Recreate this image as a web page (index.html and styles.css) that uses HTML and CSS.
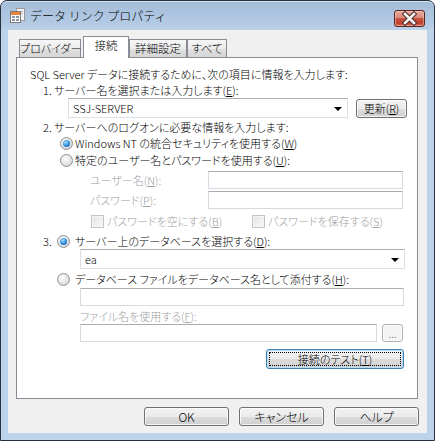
FILE: index.html
```html
<!DOCTYPE html>
<html lang="ja">
<head>
    <meta charset="UTF-8">
    <title>データ リンク プロパティ</title>
    <link rel="stylesheet" href="styles.css">
</head>
<body>
<div class="window">
    <div class="titlebar">
        <svg class="app-icon" width="16" height="16" viewBox="0 0 16 16">
            <rect x="6.5" y="0.5" width="8" height="12" fill="#f4f4f4" stroke="#9a9a9a"/>
            <line x1="8" y1="3.5" x2="13" y2="3.5" stroke="#b8b8b8"/>
            <line x1="8" y1="5.5" x2="13" y2="5.5" stroke="#b8b8b8"/>
            <rect x="0.5" y="3.5" width="10" height="11" fill="#fff" stroke="#7a7a7a"/>
            <rect x="1" y="4" width="9" height="3" fill="#e9843c"/>
            <rect x="2" y="8" width="3" height="2" fill="#8b96a6"/>
            <rect x="6" y="8" width="3" height="2" fill="#8b96a6"/>
            <rect x="2" y="11" width="3" height="2" fill="#8b96a6"/>
            <rect x="6" y="11" width="3" height="2" fill="#8b96a6"/>
        </svg>
        <span class="title">データ リンク プロパティ</span>
        <div class="close">
            <svg width="31" height="17" viewBox="0 0 31 17">
                <path d="M11 4 L20 13 M20 4 L11 13" stroke="#4b2b28" stroke-width="4.6" stroke-linecap="square"/>
                <path d="M11 4 L20 13 M20 4 L11 13" stroke="#f4f4f4" stroke-width="2.6" stroke-linecap="square"/>
            </svg>
        </div>
    </div>

    <div class="client">
        <div class="tabs">
            <span class="tab t1">プロバイダー</span>
            <span class="tab active">接続</span>
            <span class="tab t3">詳細設定</span>
            <span class="tab t4">すべて</span>
        </div>

        <div class="panel">
            <div class="line intro">SQL Server データに接続するために、次の項目に情報を入力します:</div>
            <div class="line step">1. サーバー名を選択または入力します(<u>E</u>):</div>

            <div class="row server-row">
                <div class="combo server-combo">SSJ-SERVER<span class="arrow"></span></div>
                <button class="btn refresh">更新(<u>R</u>)</button>
            </div>

            <div class="line step step2">2. サーバーへのログオンに必要な情報を入力します:</div>
            <div class="line opt">
                <span class="radio checked"></span>Windows NT の統合セキュリティを使用する(<u>W</u>)
            </div>
            <div class="line opt opt-user">
                <span class="radio"></span>特定のユーザー名とパスワードを使用する(<u>U</u>):
            </div>

            <div class="row cred user-row">
                <span class="cred-label">ユーザー名(<u>N</u>):</span>
                <div class="field cred-field"></div>
            </div>
            <div class="row cred pass-row">
                <span class="cred-label">パスワード(<u>P</u>):</span>
                <div class="field cred-field"></div>
            </div>

            <div class="line checks">
                <span class="check-item"><span class="checkbox"></span>パスワードを空にする(<u>B</u>)</span>
                <span class="check-item"><span class="checkbox"></span>パスワードを保存する(<u>S</u>)</span>
            </div>

            <div class="line step step3">
                <span class="num">3.</span><span class="radio checked wide"></span>サーバー上のデータベースを選択する(<u>D</u>):
            </div>
            <div class="combo db-combo">ea<span class="arrow"></span></div>

            <div class="line attach">
                <span class="radio wide"></span>データベース ファイルをデータベース名として添付する(<u>H</u>):
            </div>
            <div class="field attach-field"></div>
            <div class="line file-label">ファイル名を使用する(<u>F</u>):</div>
            <div class="row file-row">
                <div class="field file-field"></div>
                <button class="btn browse" disabled>...</button>
            </div>

            <button class="btn test focus"><span class="focus-ring">接続のテスト(<u>T</u>)</span></button>
        </div>

        <div class="actions">
            <button class="btn">OK</button>
            <button class="btn">キャンセル</button>
            <button class="btn">ヘルプ</button>
        </div>
    </div>
</div>
</body>
</html>
```

FILE: styles.css
```css
* {
    box-sizing: border-box;
}
body {
    margin: 0;
    font-family: "Noto Sans CJK JP", "Liberation Sans", sans-serif;
    font-size: 11px;
    font-weight: 300;
    font-feature-settings: "palt";
    color: #000;
}
u {
    text-decoration: underline;
    text-underline-offset: 1px;
}

/* window frame */
.window {
    width: 435px;
    height: 441px;
    border: 1px solid #27323f;
    border-radius: 7px 7px 0 0;
    background: linear-gradient(#a3bcd8 0, #b3cae4 22px, #bcd3ea 30px);
    box-shadow: inset 0 1px 0 #d4e2f1;
    padding: 0 7px 7px;
    display: flex;
    flex-direction: column;
    overflow: hidden;
}
.titlebar {
    height: 29px;
    margin: 0 -7px;
    padding-left: 9px;
    display: flex;
    align-items: center;
}
.app-icon {
    margin-top: 1px;
    flex: none;
}
.title {
    margin-left: 4px;
    font-size: 12px;
    font-feature-settings: normal;
}
.close {
    margin-left: auto;
    margin-right: 9px;
    align-self: flex-start;
    margin-top: 9px;
    width: 31px;
    height: 17px;
    border: 1px solid #5a231d;
    border-radius: 3px;
    background: linear-gradient(#e9a99b 0%, #d98a7a 45%, #c65440 50%, #c0402c 80%, #d26b55 100%);
    box-shadow: inset 0 0 0 1px rgba(255, 220, 210, 0.45);
    overflow: hidden;
}
.close svg {
    display: block;
    margin: -1px 0 0 -1px;
}

/* client area */
.client {
    flex: 1;
    background: #f0f0f0;
    padding: 6px 9px 0 8px;
}
.tabs {
    height: 22px;
    display: flex;
    align-items: flex-end;
    padding-left: 3px;
    margin-bottom: -1px;
    position: relative;
    z-index: 1;
}
.tab {
    height: 18px;
    margin-bottom: 1px;
    border: 1px solid #898c95;
    border-bottom: none;
    background: linear-gradient(#f6f6f6, #ececec 50%, #e0e0e0 51%, #d6d6d6);
    text-align: center;
    line-height: 17px;
    font-size: 11.5px;
    white-space: nowrap;
}
.tab.t1 {
    width: 62px;
    font-size: 11px;
}
.tab.active {
    width: 46px;
    height: 22px;
    margin: 0 0 0 2px;
    background: #fff;
    line-height: 16px;
}
.tab.t3 { width: 58px; }
.tab.t4 { width: 40px; }

.panel {
    height: 342px;
    border: 1px solid #898c95;
    background: #fff;
}

/* rows inside the panel */
.line {
    height: 16px;
    line-height: 16px;
    white-space: nowrap;
    display: flex;
    align-items: center;
}
.row {
    display: flex;
    align-items: center;
}
.intro {
    margin: 8px 0 0 13px;
}
.step {
    margin-left: 26px;
}
.server-row {
    margin: 0 0 0 51px;
    height: 20px;
}
.step2 {
    margin-top: 1px;
}
.opt {
    margin-left: 43px;
}
.opt-user {
    margin-top: 1px;
}
.cred {
    height: 18px;
    margin-left: 73px;
    color: #a0a0a0;
}
.user-row { margin-top: 3px; }
.pass-row { margin-top: 2px; }
.cred-label {
    width: 118px;
}
.cred-field {
    width: 195px;
}
.checks {
    margin: 4px 0 0 74px;
    color: #a0a0a0;
}
.check-item {
    display: flex;
    align-items: center;
}
.check-item:first-child {
    width: 161px;
}
.step3 {
    margin-top: 4px;
}
.num {
    width: 14px;
}
.db-combo {
    margin-left: 63px;
    width: 325px;
    height: 20px;
}
.attach {
    margin: 2px 0 0 40px;
}
.attach-field {
    margin: 1px 0 0 63px;
    width: 324px;
}
.file-label {
    margin: 3px 0 0 63px;
    height: 15px;
    line-height: 15px;
    color: #a0a0a0;
}
.file-row {
    margin-left: 63px;
    height: 18px;
}
.file-field {
    width: 297px;
}

/* controls */
.field {
    height: 18px;
    background: #fff;
    border: 1px solid #d5d9e0;
    border-top-color: #abadb3;
}
.combo {
    position: relative;
    background: #fff;
    border: 1px solid #dcdfe5;
    border-top-color: #abadb3;
    padding-left: 4px;
    line-height: 18px;
}
.server-combo {
    width: 280px;
    height: 20px;
}
.arrow {
    position: absolute;
    right: 5px;
    top: 8px;
    border-left: 4px solid transparent;
    border-right: 4px solid transparent;
    border-top: 4px solid #000;
}
.radio {
    width: 13px;
    height: 13px;
    margin-right: 2px;
    border-radius: 50%;
    border: 1px solid #8f9094;
    background: radial-gradient(circle at 40% 35%, #fdfdfd, #dcdcdc 70%, #cfcfcf);
    flex: none;
    position: relative;
}
.radio.wide {
    margin-right: 5px;
}
.radio.checked::after {
    content: "";
    position: absolute;
    left: 2px;
    top: 2px;
    width: 7px;
    height: 7px;
    border-radius: 50%;
    background: radial-gradient(circle at 40% 35%, #a6e0ff, #2b8bd8 55%, #0c4c9c);
}
.checkbox {
    width: 13px;
    height: 13px;
    margin-right: 3px;
    border: 1px solid #c2c4c8;
    background: linear-gradient(135deg, #e4e4e4, #f7f7f7);
    box-shadow: inset 0 0 0 1px #f4f4f4;
    flex: none;
}

.btn {
    font: inherit;
    font-feature-settings: "palt";
    color: #000;
    padding: 0;
    border: 1px solid #707070;
    border-radius: 3px;
    background: linear-gradient(#f2f2f2 0%, #ebebeb 50%, #dddddd 51%, #cfcfcf 100%);
    box-shadow: inset 0 0 0 1px rgba(255, 255, 255, 0.75);
    white-space: nowrap;
}
.refresh {
    margin-left: 8px;
    width: 51px;
    height: 19px;
}
.browse {
    margin-left: 5px;
    width: 21px;
    height: 18px;
    border-color: #adb2b5;
    background: #f4f4f4;
    color: #838383;
    line-height: 10px;
}
.test {
    display: block;
    margin: 7px 0 0 249px;
    width: 138px;
    height: 20px;
}
.btn.focus {
    border-color: #3c7fb1;
    box-shadow: inset 0 0 0 1px #b7e0f7;
    padding: 2px;
}
.focus-ring {
    display: block;
    height: 100%;
    border: 1px dotted #000;
    line-height: 13px;
}

.actions {
    display: flex;
    justify-content: flex-end;
    gap: 10px;
    margin: 8px -1px 0 0;
}
.actions .btn {
    width: 85px;
    height: 19px;
    font-size: 12px;
}
```
